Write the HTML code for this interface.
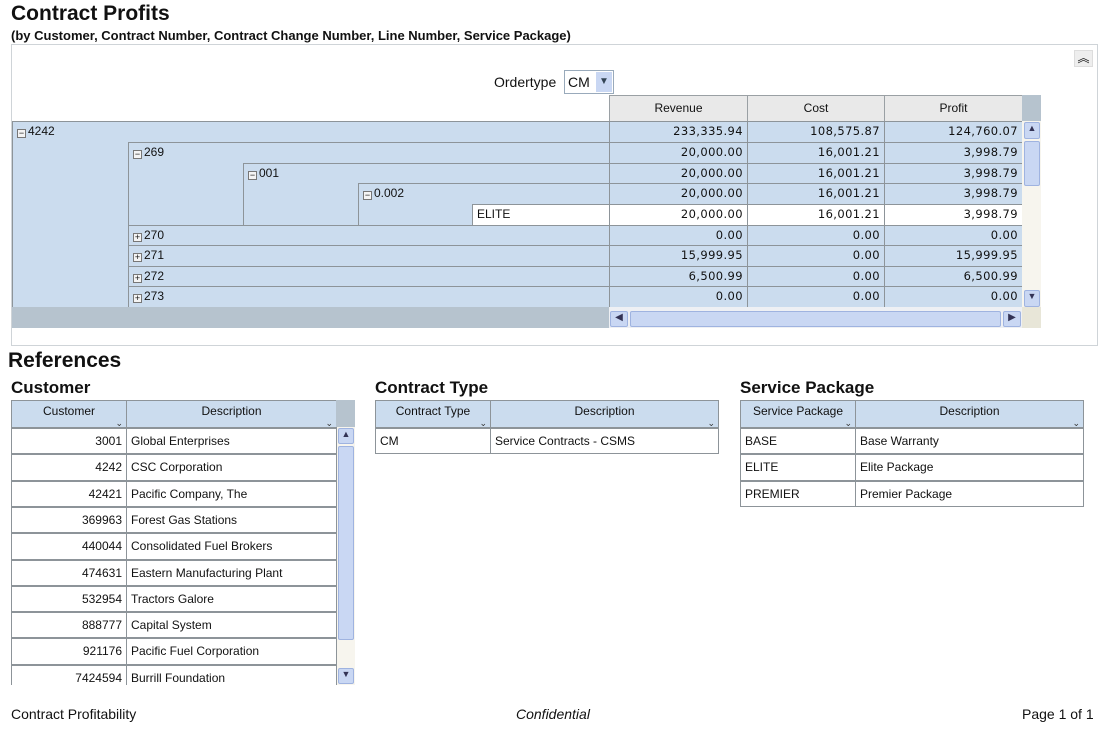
<!DOCTYPE html>
<html><head><meta charset="utf-8"><style>
*{margin:0;padding:0;box-sizing:border-box}
body{width:1103px;height:733px;background:#fff;position:relative;overflow:hidden;font-family:"Liberation Sans",sans-serif;color:#111}
.a{position:absolute}
.c{position:absolute;border:1px solid #8d9499;font-size:12px;line-height:19px;padding:0 4px;white-space:nowrap;overflow:hidden}
.blue{background:#cbdcee}
.num{text-align:right;font-family:"DejaVu Sans",sans-serif;font-size:11.5px;letter-spacing:0.4px}
.h{background:#e9e9e9;text-align:center;border-color:#9aa0a4}
.pm{display:inline-block;width:9px;height:9px;border:1px solid #777;font-size:9px;line-height:7px;text-align:center;margin-right:2px;vertical-align:-1px;background:#f4f4f4}
.rh{background:#cbdcee;text-align:center;font-size:12px;line-height:20px;border:1px solid #8d9499;position:absolute}
.rc{position:absolute;border:1px solid #8d9499;border-top:2px solid #8d9499;font-size:12px;line-height:24px;padding:0 4px;background:#fff;white-space:nowrap}
.rn{text-align:right}
.dd{position:absolute;right:3px;bottom:-6px;font-size:9px;color:#333}
.sb{position:absolute;background:#c9d7f3;border:1px solid #9fb3e0;border-radius:2px}
</style></head><body>
<div class="a" style="left:11px;top:2px;font-size:21px;font-weight:bold">Contract Profits</div>
<div class="a" style="left:11px;top:28px;font-size:13px;font-weight:bold">(by Customer, Contract Number, Contract Change Number, Line Number, Service Package)</div>
<div class="a" style="left:11px;top:44px;width:1087px;height:302px;border:1px solid #cfd4d8"></div>
<div class="a" style="left:1074px;top:50px;width:19px;height:17px;background:#eee;border:1px solid #ddd;font-size:12px;text-align:center;line-height:15px">︽</div>
<div class="a" style="left:494px;top:74px;font-size:14px">Ordertype</div>
<div class="a" style="left:564px;top:70px;width:50px;height:24px;border:1px solid #9ab;background:#fff;font-size:14px;line-height:22px;padding-left:3px">CM<span class="a" style="right:1px;top:1px;width:16px;height:20px;background:#c9d7f3;color:#345;font-size:10px;text-align:center;line-height:20px">▼</span></div>
<div class="c h" style="left:609px;top:95px;width:139px;height:27px;line-height:24px">Revenue</div>
<div class="c h" style="left:747px;top:95px;width:138px;height:27px;line-height:24px">Cost</div>
<div class="c h" style="left:884px;top:95px;width:139px;height:27px;line-height:24px">Profit</div>
<div class="a" style="left:1022px;top:95px;width:19px;height:27px;background:#b6c3ce"></div>
<div class="c blue" style="left:12px;top:121px;width:598px;height:187px"><span class="pm">−</span>4242</div>
<div class="c blue" style="left:128px;top:142px;width:482px;height:84px"><span class="pm">−</span>269</div>
<div class="c blue" style="left:243px;top:163px;width:367px;height:63px"><span class="pm">−</span>001</div>
<div class="c blue" style="left:358px;top:183px;width:252px;height:43px"><span class="pm">−</span>0.002</div>
<div class="c" style="left:472px;top:204px;width:138px;height:22px;background:#fff">ELITE</div>
<div class="c blue" style="left:128px;top:225px;width:482px;height:21px"><span class="pm">+</span>270</div>
<div class="c blue" style="left:128px;top:245px;width:482px;height:22px"><span class="pm">+</span>271</div>
<div class="c blue" style="left:128px;top:266px;width:482px;height:21px"><span class="pm">+</span>272</div>
<div class="c blue" style="left:128px;top:286px;width:482px;height:22px"><span class="pm">+</span>273</div>
<div class="c blue num" style="left:609px;top:121px;width:139px;height:22px">233,335.94</div><div class="c blue num" style="left:747px;top:121px;width:138px;height:22px">108,575.87</div><div class="c blue num" style="left:884px;top:121px;width:139px;height:22px">124,760.07</div>
<div class="c blue num" style="left:609px;top:142px;width:139px;height:22px">20,000.00</div><div class="c blue num" style="left:747px;top:142px;width:138px;height:22px">16,001.21</div><div class="c blue num" style="left:884px;top:142px;width:139px;height:22px">3,998.79</div>
<div class="c blue num" style="left:609px;top:163px;width:139px;height:21px">20,000.00</div><div class="c blue num" style="left:747px;top:163px;width:138px;height:21px">16,001.21</div><div class="c blue num" style="left:884px;top:163px;width:139px;height:21px">3,998.79</div>
<div class="c blue num" style="left:609px;top:183px;width:139px;height:22px">20,000.00</div><div class="c blue num" style="left:747px;top:183px;width:138px;height:22px">16,001.21</div><div class="c blue num" style="left:884px;top:183px;width:139px;height:22px">3,998.79</div>
<div class="c num" style="left:609px;top:204px;width:139px;height:22px;background:#fff">20,000.00</div><div class="c num" style="left:747px;top:204px;width:138px;height:22px;background:#fff">16,001.21</div><div class="c num" style="left:884px;top:204px;width:139px;height:22px;background:#fff">3,998.79</div>
<div class="c blue num" style="left:609px;top:225px;width:139px;height:21px">0.00</div><div class="c blue num" style="left:747px;top:225px;width:138px;height:21px">0.00</div><div class="c blue num" style="left:884px;top:225px;width:139px;height:21px">0.00</div>
<div class="c blue num" style="left:609px;top:245px;width:139px;height:22px">15,999.95</div><div class="c blue num" style="left:747px;top:245px;width:138px;height:22px">0.00</div><div class="c blue num" style="left:884px;top:245px;width:139px;height:22px">15,999.95</div>
<div class="c blue num" style="left:609px;top:266px;width:139px;height:21px">6,500.99</div><div class="c blue num" style="left:747px;top:266px;width:138px;height:21px">0.00</div><div class="c blue num" style="left:884px;top:266px;width:139px;height:21px">6,500.99</div>
<div class="c blue num" style="left:609px;top:286px;width:139px;height:22px">0.00</div><div class="c blue num" style="left:747px;top:286px;width:138px;height:22px">0.00</div><div class="c blue num" style="left:884px;top:286px;width:139px;height:22px">0.00</div>
<div class="a" style="left:12px;top:307px;width:598px;height:21px;background:#b6c3ce"></div>
<div class="a" style="left:609px;top:307px;width:414px;height:21px;background:#eef0f4"></div>
<div class="sb" style="left:610px;top:311px;width:18px;height:16px;font-size:10px;text-align:center;color:#335">◀</div>
<div class="sb" style="left:630px;top:311px;width:371px;height:16px"></div>
<div class="sb" style="left:1003px;top:311px;width:18px;height:16px;font-size:10px;text-align:center;color:#335">▶</div>
<div class="a" style="left:1022px;top:121px;width:19px;height:207px;background:#f7f5ee"></div>
<div class="sb" style="left:1024px;top:122px;width:16px;height:17px;font-size:9px;text-align:center;color:#335">▲</div>
<div class="sb" style="left:1024px;top:141px;width:16px;height:45px"></div>
<div class="sb" style="left:1024px;top:290px;width:16px;height:17px;font-size:9px;text-align:center;color:#335">▼</div>
<div class="a" style="left:1022px;top:307px;width:19px;height:21px;background:#e8e6d8"></div>

<div class="a" style="left:8px;top:349px;font-size:21px;font-weight:bold">References</div>
<div class="a" style="left:11px;top:378px;font-size:17px;font-weight:bold">Customer</div>
<div class="a" style="left:375px;top:378px;font-size:17px;font-weight:bold">Contract Type</div>
<div class="a" style="left:740px;top:378px;font-size:17px;font-weight:bold">Service Package</div>

<div class="rh" style="left:11px;top:400px;width:116px;height:28px">Customer<span class="dd">⌄</span></div>
<div class="rh" style="left:126px;top:400px;width:211px;height:28px">Description<span class="dd">⌄</span></div>
<div class="a" style="left:336px;top:400px;width:19px;height:28px;background:#b6c3ce"></div>
<div class="a" style="left:11px;top:427px;width:326px;height:258px;overflow:hidden">
<div style="position:relative">
<div class="rc rn" style="left:0;top:0;width:116px;height:27px">3001</div><div class="rc" style="left:115px;top:0;width:211px;height:27px">Global Enterprises</div>
<div class="rc rn" style="left:0;top:26px;width:116px;height:28px">4242</div><div class="rc" style="left:115px;top:26px;width:211px;height:28px">CSC Corporation</div>
<div class="rc rn" style="left:0;top:53px;width:116px;height:27px">42421</div><div class="rc" style="left:115px;top:53px;width:211px;height:27px">Pacific Company, The</div>
<div class="rc rn" style="left:0;top:79px;width:116px;height:27px">369963</div><div class="rc" style="left:115px;top:79px;width:211px;height:27px">Forest Gas Stations</div>
<div class="rc rn" style="left:0;top:105px;width:116px;height:28px">440044</div><div class="rc" style="left:115px;top:105px;width:211px;height:28px">Consolidated Fuel Brokers</div>
<div class="rc rn" style="left:0;top:132px;width:116px;height:27px">474631</div><div class="rc" style="left:115px;top:132px;width:211px;height:27px">Eastern Manufacturing Plant</div>
<div class="rc rn" style="left:0;top:158px;width:116px;height:27px">532954</div><div class="rc" style="left:115px;top:158px;width:211px;height:27px">Tractors Galore</div>
<div class="rc rn" style="left:0;top:184px;width:116px;height:27px">888777</div><div class="rc" style="left:115px;top:184px;width:211px;height:27px">Capital System</div>
<div class="rc rn" style="left:0;top:210px;width:116px;height:28px">921176</div><div class="rc" style="left:115px;top:210px;width:211px;height:28px">Pacific Fuel Corporation</div>
<div class="rc rn" style="left:0;top:237px;width:116px;height:28px">7424594</div><div class="rc" style="left:115px;top:237px;width:211px;height:28px">Burrill Foundation</div>
</div></div>
<div class="a" style="left:337px;top:427px;width:18px;height:258px;background:#f7f5ee"></div>
<div class="sb" style="left:338px;top:428px;width:16px;height:16px;font-size:9px;text-align:center;color:#335">▲</div>
<div class="sb" style="left:338px;top:446px;width:16px;height:194px"></div>
<div class="sb" style="left:338px;top:668px;width:16px;height:16px;font-size:9px;text-align:center;color:#335">▼</div>

<div class="rh" style="left:375px;top:400px;width:116px;height:28px">Contract Type<span class="dd">⌄</span></div>
<div class="rh" style="left:490px;top:400px;width:229px;height:28px">Description<span class="dd">⌄</span></div>
<div class="rc" style="left:375px;top:427px;width:116px;height:27px">CM</div><div class="rc" style="left:490px;top:427px;width:229px;height:27px">Service Contracts - CSMS</div>

<div class="rh" style="left:740px;top:400px;width:116px;height:28px">Service Package<span class="dd">⌄</span></div>
<div class="rh" style="left:855px;top:400px;width:229px;height:28px">Description<span class="dd">⌄</span></div>
<div class="rc" style="left:740px;top:427px;width:116px;height:27px">BASE</div><div class="rc" style="left:855px;top:427px;width:229px;height:27px">Base Warranty</div>
<div class="rc" style="left:740px;top:453px;width:116px;height:28px">ELITE</div><div class="rc" style="left:855px;top:453px;width:229px;height:28px">Elite Package</div>
<div class="rc" style="left:740px;top:480px;width:116px;height:27px">PREMIER</div><div class="rc" style="left:855px;top:480px;width:229px;height:27px">Premier Package</div>

<div class="a" style="left:11px;top:706px;font-size:14px">Contract Profitability</div>
<div class="a" style="left:516px;top:706px;font-size:14px;font-style:italic">Confidential</div>
<div class="a" style="left:1022px;top:706px;font-size:14px">Page 1 of 1</div>
</body></html>
